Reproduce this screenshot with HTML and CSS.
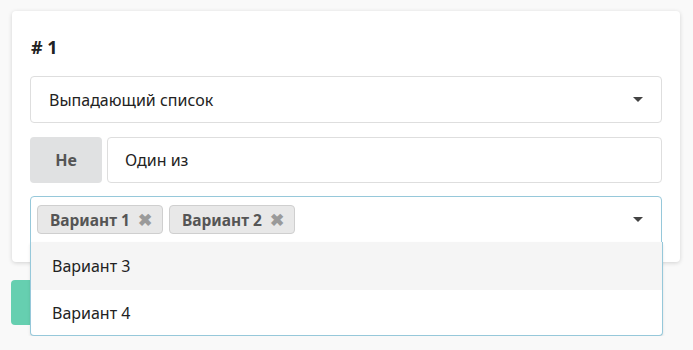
FILE: index.html
```html
<!DOCTYPE html>
<html lang="ru">
<head>
  <meta charset="UTF-8" />
  <meta name="viewport" content="width=device-width, initial-scale=1.0"/>
  <title>Условие</title>
  <link rel="stylesheet" href="styles.css">
</head>
<body>

  <div class="card">
    <h2 class="title"># 1</h2>

    <div class="select">
      <span class="select-text">Выпадающий список</span>
      <span class="caret"></span>
    </div>

    <div class="row">
      <button class="toggle">Не</button>
      <div class="input">Один из</div>
    </div>

    <div class="select multi open">
      <span class="tag">Вариант 1 <span class="remove">✖</span></span>
      <span class="tag">Вариант 2 <span class="remove">✖</span></span>
      <span class="caret"></span>
      <div class="menu">
        <div class="item hover">Вариант 3</div>
        <div class="item">Вариант 4</div>
      </div>
    </div>
  </div>

  <button class="save"></button>

</body>
</html>
```

FILE: styles.css
```css
body {
  margin: 0;
  padding: 11px 13px 11px 12px;
  background: #f9f9f9;
  font-family: 'Noto Sans', 'Open Sans', sans-serif;
  font-size: 16px;
  color: #222;
}
.card {
  background: white;
  border-radius: 4px;
  box-shadow: 0 1px 4px rgba(0, 0, 0, 0.16);
  padding: 18px 18px 19px 18px;
}
.title {
  margin: 0 0 15px 1px;
  padding-top: 4px;
  font-size: 18px;
  line-height: 28px;
  font-weight: bold;
}
.select {
  position: relative;
  display: flex;
  align-items: center;
  height: 47px;
  box-sizing: border-box;
  padding: 0 18px;
  border: 1px solid #dedede;
  border-radius: 4px;
  margin-bottom: 14px;
}
.caret {
  margin-left: auto;
  margin-right: 0;
  width: 0;
  height: 0;
  border-left: 5px solid transparent;
  border-right: 5px solid transparent;
  border-top: 5px solid #444;
}
.row {
  display: flex;
  gap: 5px;
  height: 46px;
  margin-bottom: 13px;
}
.toggle {
  width: 72px;
  border: none;
  border-radius: 4px;
  background: #e0e1e2;
  color: #555;
  font-family: inherit;
  font-size: 16px;
  font-weight: bold;
}
.input {
  flex: 1;
  display: flex;
  align-items: center;
  padding: 0 17px;
  border: 1px solid #dedede;
  border-radius: 4px;
}
.multi {
  margin-bottom: 0;
  padding-left: 6px;
  gap: 6px;
  border-color: #96c8da;
  border-radius: 4px 4px 0 0;
}
.tag {
  display: inline-flex;
  align-items: center;
  height: 29px;
  box-sizing: border-box;
  padding: 0 10px 0 12px;
  background: #e8e8e8;
  border: 1px solid #cfcfcf;
  border-radius: 4px;
  color: #555;
  font-size: 15.5px;
  font-weight: bold;
  white-space: pre;
}
.remove {
  margin-left: 4px;
  color: #9a9a9a;
  font-size: 17px;
  line-height: 1;
}
.menu {
  position: absolute;
  left: -1px;
  right: -2px;
  top: 100%;
  background: white;
  border: 1px solid #96c8da;
  border-top: none;
  border-radius: 0 0 4px 4px;
  box-shadow: 0 2px 3px rgba(0, 0, 0, 0.1);
  z-index: 2;
}
.item {
  height: 45px;
  display: flex;
  align-items: center;
  padding-left: 21px;
}
.item.hover {
  background: #f5f5f5;
  height: 48px;
}
.save {
  display: block;
  margin-top: 18px;
  margin-left: -1px;
  width: 140px;
  height: 45px;
  border: none;
  border-radius: 4px;
  background: #66cfb0;
}
```
